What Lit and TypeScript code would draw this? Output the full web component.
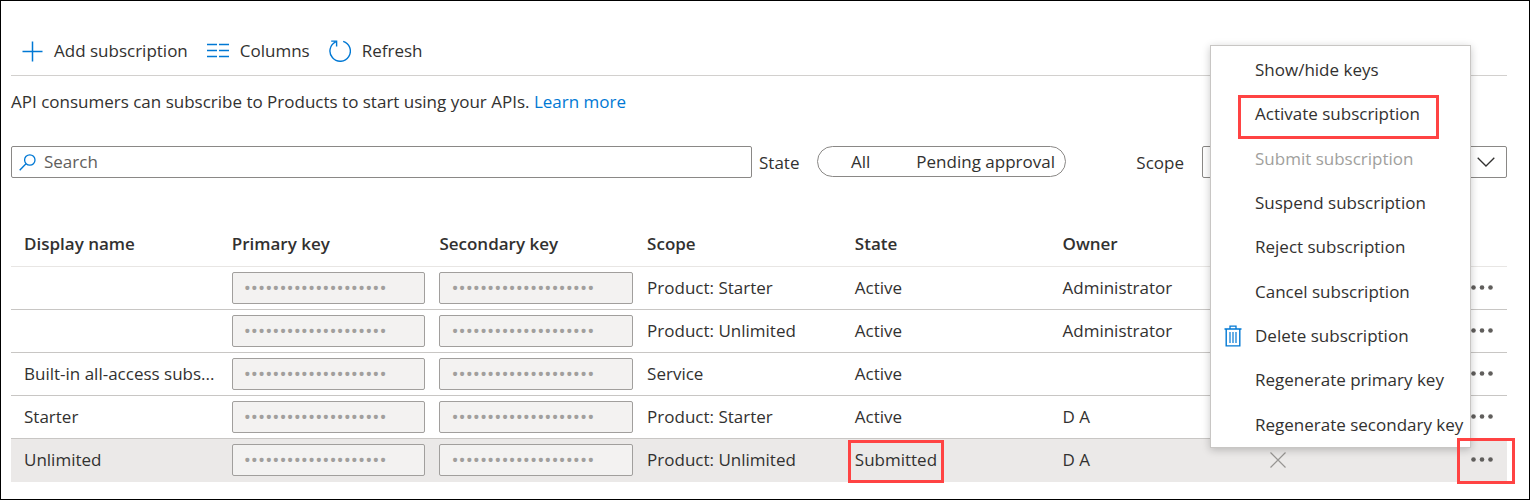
import { LitElement, html, css, svg, nothing } from "lit";
import { customElement, state } from "lit/decorators.js";

interface Subscription {
  name: string;
  scope: string;
  state: string;
  owner: string;
  pending?: boolean;
}

interface MenuItem {
  label: string;
  disabled?: boolean;
  marked?: boolean;
  icon?: boolean;
}

const SUBSCRIPTIONS: Subscription[] = [
  { name: "", scope: "Product: Starter", state: "Active", owner: "Administrator" },
  { name: "", scope: "Product: Unlimited", state: "Active", owner: "Administrator" },
  { name: "Built-in all-access subs...", scope: "Service", state: "Active", owner: "" },
  { name: "Starter", scope: "Product: Starter", state: "Active", owner: "D A" },
  { name: "Unlimited", scope: "Product: Unlimited", state: "Submitted", owner: "D A", pending: true },
];

const MENU: MenuItem[] = [
  { label: "Show/hide keys" },
  { label: "Activate subscription", marked: true },
  { label: "Submit subscription", disabled: true },
  { label: "Suspend subscription" },
  { label: "Reject subscription" },
  { label: "Cancel subscription" },
  { label: "Delete subscription", icon: true },
  { label: "Regenerate primary key" },
  { label: "Regenerate secondary key" },
];

const HEADERS = ["Display name", "Primary key", "Secondary key", "Scope", "State", "Owner", "", ""];

const icon = (width: number, height: number, body: unknown) => html`<svg
  class="icon" width=${width} height=${height} viewBox="0 0 ${width} ${height}" fill="none" aria-hidden="true"
>${body}</svg>`;

const addIcon = icon(21, 21, svg`<path d="M10.5 0.5v20M0.5 10.5h20" stroke="#0078d4" stroke-width="1.5"/>`);
const columnsIcon = icon(22, 22, svg`<path d="M0 4.5h10M12 4.5h10M0 10.5h10M12 10.5h10M0 16.5h10M12 16.5h10" stroke="#0078d4" stroke-width="1.3"/>`);
const refreshIcon = icon(22, 22, svg`<path d="M14.2 1.3A10.2 10.2 0 1 1 6.6 1.9M2.2 1.1h5.4v5.4" stroke="#0078d4" stroke-width="1.4"/>`);
const searchIcon = icon(17, 17, svg`<circle cx="10.8" cy="6" r="5.2" stroke="#0078d4" stroke-width="1.3"/><path d="M7 9.8L0.7 16.2" stroke="#0078d4" stroke-width="1.4"/>`);
const chevronIcon = icon(18, 10, svg`<path d="M0.7 0.7L9 9l8.3-8.3" stroke="#323130" stroke-width="1.3"/>`);
const crossIcon = icon(16, 16, svg`<path d="M0.5 0.5l15 15M15.5 0.5l-15 15" stroke="#979593" stroke-width="1.2"/>`);
const dotsIcon = icon(22, 5, svg`<g fill="#605e5c"><circle cx="2.5" cy="2.5" r="2.3"/><circle cx="11" cy="2.5" r="2.3"/><circle cx="19.5" cy="2.5" r="2.3"/></g>`);
const trashIcon = icon(18, 22, svg`<path d="M0.5 4h17M6 3.5V1.2h6v2.3" stroke="#0078d4" stroke-width="1.3"/><path d="M2.2 4v16.9h13.6V4" stroke="#0078d4" stroke-width="1.4"/><path d="M6 7v11M9 7v11M12 7v11" stroke="#0078d4" stroke-width="1.2"/>`);

@customElement("app-root")
export class AppRoot extends LitElement {
  @state() private filter = "";

  static styles = css`
    :host {
      display: block;
      color: #323130;
      font: 17px/24px "Open Sans", "Noto Sans", sans-serif;
    }
    * { box-sizing: border-box; }
    button, input, select { font: inherit; color: inherit; }
    button { background: none; border: 0; padding: 0; cursor: pointer; }
    .icon { display: block; flex: none; }
    .page {
      position: relative;
      min-height: 100vh;
      border: 1px solid #000;
      padding: 24px 22px 16px 10px;
      background: #fff;
    }
    .toolbar {
      display: flex;
      gap: 19px;
      height: 51px;
      padding: 2px 0 0 11px;
      border-bottom: 1px solid #d2d0ce;
    }
    .command { display: flex; align-items: center; gap: 11px; }
    .intro { margin: 14px 0 32px; }
    .link { color: #0078d4; text-decoration: none; }
    .filters {
      display: grid;
      grid-template-columns: minmax(0, 741fr) 65px 249px 136px minmax(0, 305fr);
      align-items: center;
      height: 32px;
    }
    .search, .scope {
      display: flex;
      align-items: center;
      height: 32px;
      border: 1px solid #8a8886;
      border-radius: 2px;
    }
    .search { gap: 8px; padding-left: 7px; }
    .search-input { flex: 1; min-width: 0; border: 0; padding: 0; background: none; outline: 0; }
    .search-input::placeholder { color: #605e5c; opacity: 1; }
    .state-label { padding: 2px 0 0 7px; }
    .scope-label { padding: 2px 18px 0 0; text-align: right; }
    .pill {
      display: flex;
      height: 31px;
      align-items: center;
      align-self: start;
      border: 1px solid #8a8886;
      border-radius: 16px;
      white-space: nowrap;
    }
    .option { display: flex; align-items: center; padding: 0 13px; }
    .radio { appearance: none; width: 20px; height: 20px; margin: 0; }
    .scope { display: grid; grid-template-columns: 1fr 29px; }
    .select { grid-area: 1 / 1 / 2 / 3; width: 100%; height: 30px; border: 0; background: none; appearance: none; }
    .chevron { grid-area: 1 / 2; pointer-events: none; }
    .table {
      width: 100%;
      margin-top: 44px;
      border-collapse: separate;
      border-spacing: 0;
      table-layout: fixed;
    }
    .more-column { width: 42px; }
    .head, .cell {
      height: 43px;
      padding: 0 1px 0 13px;
      text-align: left;
      border-bottom: 1px solid #c8c6c4;
      white-space: nowrap;
    }
    .head { height: 45px; font-weight: 600; border-color: #e8e6e4; }
    .selected .cell { background: #ebe9e8; border-color: #ebe9e8; }
    .cell.more { padding: 0 0 2px 6px; }
    .key {
      display: block;
      width: 100%;
      height: 32px;
      padding: 0 11px;
      border: 1px solid #a19f9d;
      border-radius: 2px;
      background: #f3f2f1;
      color: #a19f9d;
      font-size: 19px;
    }
    .reject { display: block; }
    .marked { position: relative; }
    .marked::after {
      content: "";
      position: absolute;
      z-index: 2;
      inset: -8px -7px -12px;
      border: 3px solid #ff4343;
      pointer-events: none;
    }
    .dots { display: block; height: 24px; }
    .dots.marked::after { inset: -9px -22px -13px -14px; }
    .menu {
      position: absolute;
      z-index: 1;
      top: 44px;
      right: 58px;
      display: grid;
      grid-auto-rows: 1fr;
      width: 261px;
      height: 403px;
      margin: 0;
      padding: 2px 0 0;
      list-style: none;
      border: 1px solid #c8c6c4;
      background: #fff;
      box-shadow: 0 2px 8px rgba(0, 0, 0, 0.22);
    }
    .item {
      display: grid;
      grid-template-columns: 18px 1fr;
      gap: 13px;
      align-items: center;
      width: 100%;
      height: 100%;
      padding-left: 13px;
      text-align: left;
      white-space: nowrap;
    }
    .item-label { grid-column: 2; }
    .item:disabled { color: #a19f9d; }
    .item.marked::after { inset: 3px 31px -2px 27px; }
  `;

  private renderRow(row: Subscription, index: number) {
    const key = (label: string) => html`<td class="cell">
      <input class="key" type="password" disabled aria-label="${label} ${index + 1}" value="00000000000000000000">
    </td>`;
    return html`<tr class=${row.pending ? "selected" : ""}>
      <td class="cell">${row.name}</td>
      ${key("Primary key")} ${key("Secondary key")}
      <td class="cell">${row.scope}</td>
      <td class="cell"><span class=${row.pending ? "marked" : ""}>${row.state}</span></td>
      <td class="cell">${row.owner}</td>
      <td class="cell">${row.pending ? html`<button class="reject" aria-label="Reject">${crossIcon}</button>` : nothing}</td>
      <td class="cell more">
        <button class="dots ${row.pending ? "marked" : ""}" aria-label="More actions">${dotsIcon}</button>
      </td>
    </tr>`;
  }

  private renderOption(label: string) {
    return html`<label class="option">
      <input class="radio" type="radio" name="state" .checked=${this.filter === label}
        @change=${() => (this.filter = label)}>${label}</label>`;
  }

  render() {
    return html`<main class="page">
      <div class="toolbar">
        <button class="command">${addIcon}Add subscription</button>
        <button class="command">${columnsIcon}Columns</button>
        <button class="command">${refreshIcon}Refresh</button>
      </div>
      <p class="intro">
        API consumers can subscribe to Products to start using your APIs.
        <a class="link" href="#">Learn more</a>
      </p>
      <div class="filters">
        <label class="search">${searchIcon}
          <input class="search-input" type="search" placeholder="Search" aria-label="Search">
        </label>
        <span class="state-label" id="state-label">State</span>
        <div class="pill" role="radiogroup" aria-labelledby="state-label">
          ${this.renderOption("All")}${this.renderOption("Pending approval")}
        </div>
        <label class="scope-label" for="scope">Scope</label>
        <div class="scope">
          <select class="select" id="scope"><option></option></select>
          <span class="chevron">${chevronIcon}</span>
        </div>
      </div>
      <table class="table">
        <colgroup><col span="7"><col class="more-column"></colgroup>
        <thead><tr>${HEADERS.map((h) => html`<th class="head" scope="col">${h}</th>`)}</tr></thead>
        <tbody>${SUBSCRIPTIONS.map((row, i) => this.renderRow(row, i))}</tbody>
      </table>
      <ul class="menu">
        ${MENU.map((m) => html`<li>
          <button class="item ${m.marked ? "marked" : ""}" ?disabled=${m.disabled}>
            ${m.icon ? trashIcon : nothing}<span class="item-label">${m.label}</span>
          </button>
        </li>`)}
      </ul>
    </main>`;
  }
}
